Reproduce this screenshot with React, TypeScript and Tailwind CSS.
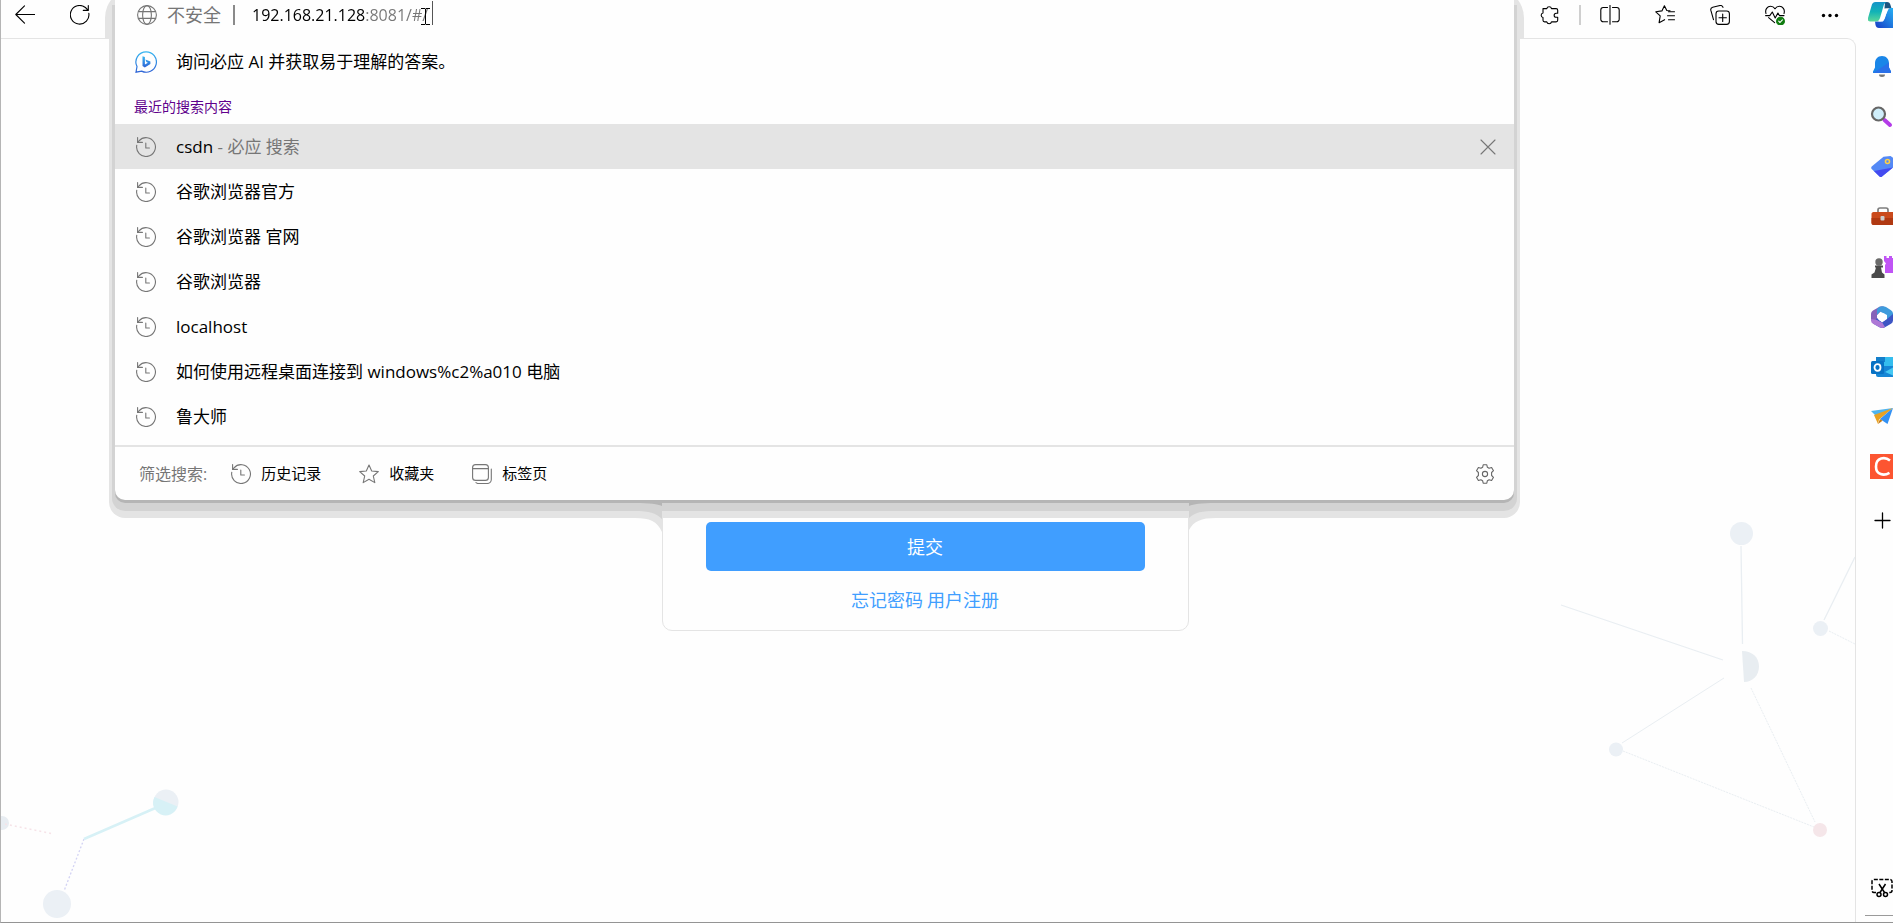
import type { ReactNode } from "react";
import { clsx } from "clsx";

type IconProps = {
  className?: string;
};

type LineIconProps = IconProps & {
  children: ReactNode;
};

function LineIcon({ className, children }: LineIconProps) {
  return (
    <svg
      viewBox="0 0 20 20"
      fill="none"
      stroke="currentColor"
      strokeWidth="1.1"
      strokeLinecap="round"
      strokeLinejoin="round"
      aria-hidden="true"
      className={clsx("h-5 w-5 shrink-0", className)}
    >
      {children}
    </svg>
  );
}

function HistoryIcon({ className }: IconProps) {
  return (
    <LineIcon className={className}>
      <path d="M.8 8.2A9.4 9.4 0 1 0 3 3.8L1.6 5.4" />
      <path d="M1.6.6v4.8h4.8M9.8 6v5h3.6" />
    </LineIcon>
  );
}

function StarIcon() {
  return (
    <LineIcon>
      <path d="M10 1l2.7 6 6.6.6-5 4.4 1.5 6.6L10 15.2l-5.8 3.4L5.700 12l-5-4.400 6.600-.6z" />
    </LineIcon>
  );
}

function TabsIcon() {
  return (
    <LineIcon>
      <rect x=".6" y=".6" width="15.800" height="15.800" rx="3" />
      <path d="M.8 4.600h15.400M19.300 5v10.500a4 4 0 0 1-4 4H6a3 3 0 0 1-2-.8" />
    </LineIcon>
  );
}

function GearIcon() {
  return (
    <LineIcon>
      <circle cx="10" cy="10" r="2.600" />
      <path d="M8.200.8h3.600l.6 2.500 1.700 1 2.500-.8 1.900 3.200-1.900 1.800v3l1.900 1.800-1.900 3.200-2.500-.8-1.700 1-.6 2.500H8.200l-.6-2.500-1.700-1-2.500.8-1.900-3.200 1.900-1.800v-3L1.500 6.700l1.900-3.200 2.500.8 1.700-1z" />
    </LineIcon>
  );
}

function GlobeIcon() {
  return (
    <LineIcon>
      <circle cx="10" cy="10" r="9.400" />
      <ellipse cx="10" cy="10" rx="4.400" ry="9.400" />
      <path d="M1.500 6.600h17M1.500 13.400h17" />
    </LineIcon>
  );
}

function CloseIcon() {
  return (
    <LineIcon>
      <path d="M3 3l14 14M17 3L3 17" />
    </LineIcon>
  );
}

function BingIcon() {
  return (
    <svg viewBox="0 0 22 22" aria-hidden="true" className="h-[22px] w-[22px] shrink-0">
      <defs>
        <linearGradient id="bing" x1="0" y1="0" x2="0" y2="1">
          <stop offset="0" stopColor="#35b5f0" />
          <stop offset="1" stopColor="#2f64d6" />
        </linearGradient>
      </defs>
      <path
        d="M11.200.8a10.200 10.200 0 1 1-4.600 19.300L1 21.200l1-5.600A10.200 10.200 0 0 1 11.200.8z"
        fill="none"
        stroke="url(#bing)"
        strokeWidth="1.200"
      />
      <path d="M7.500 5.200l2.400.9v7.300l3-1.700-1.500-.7-1-2.400 5 1.800v2.700l-5.600 3.300-2.300-1.300z" fill="url(#bing)" />
    </svg>
  );
}

const toolbarIcons = [
  {
    label: "分屏",
    icon: (
      <LineIcon>
        <path d="M7.500 2.500H3.200A2.400 2.400 0 0 0 .8 4.900v9.400a2.400 2.400 0 0 0 2.400 2.400h4.300M12.500 2.500h4.300a2.400 2.400 0 0 1 2.400 2.400v9.400a2.400 2.400 0 0 1-2.400 2.400h-4.300M10 .3v19" />
      </LineIcon>
    ),
  },
  {
    label: "收藏",
    icon: (
      <LineIcon>
        <path d="M15 5.900l-3.200-.4L9.400.7 6.900 5.900.8 6.800l4.400 4.100-1.100 6.800 5.500-3" />
        <path d="M13.500 6.800h6M12.500 10.800h7M13.500 14.800h6" />
      </LineIcon>
    ),
  },
  {
    label: "集锦",
    icon: (
      <LineIcon>
        <rect x="6" y="6" width="13.400" height="13.400" rx="2.800" />
        <path d="M12.700 9v7.400M9 12.700h7.400M3.500 14.600L.8 5.200a2.600 2.600 0 0 1 1.900-3L10 .5a2.500 2.500 0 0 1 3 2" />
      </LineIcon>
    ),
  },
  {
    label: "浏览器概要",
    icon: (
      <LineIcon>
        <path d="M1 8.500C-.3 4.500 2.500 1.300 5.500 1.300c2 0 3.500 1 4.500 2.500 1-1.500 2.500-2.500 4.500-2.500 3 0 5.800 3.200 4.500 7.200M3.600 12.600l6 5" />
        <path d="M.6 10.600h4.200L7.300 7l2.900 6 2.700-5 1.500 2.600H19" />
        <circle cx="15.500" cy="16.200" r="3.900" fill="#107c10" stroke="#107c10" />
        <path d="M13.700 16.200l1.300 1.300 2.400-2.600" stroke="#fff" />
      </LineIcon>
    ),
  },
  {
    label: "更多",
    icon: (
      <svg viewBox="0 0 20 20" aria-hidden="true" className="h-5 w-5">
        <circle cx="3.500" cy="10.500" r="1.700" />
        <circle cx="10" cy="10.500" r="1.700" />
        <circle cx="16.500" cy="10.500" r="1.700" />
      </svg>
    ),
  },
];

function Toolbar() {
  return (
    <header className="flex h-[38px] items-start justify-between pr-4 pl-[14px] pt-[5px] text-black">
      <div className="flex gap-[35px]">
        <button type="button" aria-label="返回">
          <LineIcon>
            <path d="M19.600 9.500H.8M9.500.8L.8 9.500l8.700 8.700" />
          </LineIcon>
        </button>
        <button type="button" aria-label="刷新">
          <LineIcon>
            <path d="M18.800 8.200A9.300 9.300 0 1 1 15.400 2.500L18.300 5.400M18.300.6v4.800h-5" />
          </LineIcon>
        </button>
      </div>
      <div className="flex items-center gap-[35px]">
        <div className="flex items-center gap-5">
          <button type="button" aria-label="扩展">
            <LineIcon>
              <path d="M4 3.600h3.800a2.400 2.400 0 0 1 4.700 0h4.600a1.600 1.600 0 0 1 1.600 1.600v3h-1.500a2 2 0 0 0 0 4.100h1.500v3a1.600 1.600 0 0 1-1.600 1.600h-4.600a2.400 2.400 0 0 1-4.700 0H5.600A1.600 1.600 0 0 1 4 15.300v-2.800a2.300 2.300 0 0 1 0-4.500z" />
            </LineIcon>
          </button>
          <span className="h-5 w-[2px] bg-[#cfcfcf]" />
        </div>
        <div className="-ml-4 flex gap-[35px]">
          {toolbarIcons.map(({ label, icon }) => (
            <button key={label} type="button" aria-label={label}>
              {icon}
            </button>
          ))}
        </div>
      </div>
    </header>
  );
}

const sidebarApps = [
  {
    label: "通知",
    icon: (
      <>
        <path d="M11 0c-4.500 0-7 3.300-7 7.500v4L2 15.500V17h18v-1.500l-2-4v-4C18 3.300 15.500 0 11 0z" fill="#1a86e8" />
        <path d="M18 6.500v5l2 4V17H2z" fill="#2a70e8" />
        <path d="M8 18.500h6a3 2.500 0 0 1-6 0z" fill="#777" />
      </>
    ),
  },
  {
    label: "搜索",
    icon: (
      <>
        <path d="M13.500 14l5.500 5" stroke="#b43be8" strokeWidth="4" strokeLinecap="round" />
        <circle cx="7.500" cy="8" r="6.500" fill="#cfeefa" stroke="#666" strokeWidth="2.200" />
      </>
    ),
  },
  {
    label: "购物",
    icon: (
      <>
        <path d="M12.500.8L19.500 0 23 2.500v8.300L11 20.500a2 2 0 0 1-2.500 0L.7 13a2 2 0 0 1 0-2.500z" fill="#5489f5" />
        <path d="M3 15L22 11.500 11 20.500a2 2 0 0 1-2.500 0z" fill="#444af0" />
        <circle cx="16.500" cy="5.500" r="2" fill="#5489f5" stroke="#ffd044" strokeWidth="1.600" />
      </>
    ),
  },
  {
    label: "工具",
    icon: (
      <>
        <path d="M7 6V4a2 2 0 0 1 2-2h6a2 2 0 0 1 2 2v2" fill="none" stroke="#7d7d7d" strokeWidth="1.700" />
        <path d="M.5 7.500A2 2 0 0 1 2.500 6H23v13H2.500a2 2 0 0 1-2-2z" fill="#ca4a1c" />
        <path d="M.5 12H23v7H2.500a2 2 0 0 1-2-2z" fill="#b03912" />
        <rect x="9.500" y="10" width="4" height="4.500" rx="1" fill="#ccc" />
      </>
    ),
  },
  {
    label: "游戏",
    icon: (
      <>
        <path d="M13 0h2.500v2H18V0h3v2h2v15h-9V9l1-1.500L13 5z" fill="#c054f5" />
        <circle cx="8" cy="6" r="3.700" fill="#6a6a6a" />
        <path d="M4 9.500h8v2h-2l1 5 2.500 2V22H.5v-3.500l3-2 1.500-5H4z" fill="#4a4a4a" />
      </>
    ),
  },
  {
    label: "Microsoft 365",
    icon: (
      <>
        <path d="M8.500.8L2 4.500A4 4 0 0 0 0 8v6.500l6 2.500V9l8-7.500a5 5 0 0 0-5.500-.7z" fill="#8662b8" />
        <path d="M8.500.8C11 0 13 0 15 1l5 3.200a4 4 0 0 1 2 3.500V12l-6 1.500V9L9 5.500 6 9V3z" fill="#3e9bdc" />
        <path d="M22 8v6.500a4 4 0 0 1-2 3.300l-6.500 3.600a5 5 0 0 1-5-.2L2 17.500 6 12l5 4.500L16 13z" fill="#3d55c4" />
        <path d="M0 13l6 1 5.500 3 2.500 4a5 5 0 0 1-5.500.2L2 17.800A4 4 0 0 1 0 14.500z" fill="#ad78d6" />
        <circle cx="10.900" cy="11" r="4" fill="#fff" />
      </>
    ),
  },
  {
    label: "Outlook",
    icon: (
      <>
        <path d="M5 1h18v10H5z" fill="#34bdee" />
        <path d="M5 1h9v5H5z" fill="#147fcb" />
        <path d="M5 10h18v11H7a2 2 0 0 1-2-2z" fill="#1686d5" />
        <path d="M23 11l-9 5 9 4z" fill="#45c8f3" />
        <rect x="0" y="5" width="13" height="13" rx="1.500" fill="#0872c4" />
        <ellipse cx="6.500" cy="11.500" rx="3" ry="3.300" fill="none" stroke="#fff" strokeWidth="1.800" />
      </>
    ),
  },
  {
    label: "Drop",
    icon: (
      <>
        <path d="M0 5l22-3L9 12 5 10z" fill="#4fb4ef" />
        <path d="M3 9L22 2 8 13.500 7 18z" fill="#e9a222" />
        <path d="M22 2L9 13l7.500 5z" fill="#3391f3" />
        <path d="M9 13l-2 5 4.500-3.200z" fill="#c77a12" />
      </>
    ),
  },
];

function Sidebar() {
  return (
    <aside className="flex w-[37px] shrink-0 flex-col overflow-hidden bg-[#fefefe] pt-[2px]">
      <a href="#copilot" aria-label="Copilot" className="ml-3 w-[26px] shrink-0">
        <svg viewBox="0 0 26 26" aria-hidden="true" className="h-[26px] w-[26px]">
          <defs>
            <linearGradient id="copilot-a" x1="0" y1="0" x2="0" y2="1">
              <stop offset="0" stopColor="#1593c9" />
              <stop offset="0.500" stopColor="#12b3b6" />
              <stop offset="1" stopColor="#5bd69a" />
            </linearGradient>
            <linearGradient id="copilot-b" x1="0" y1="1" x2="1" y2="0">
              <stop offset="0" stopColor="#173bc6" />
              <stop offset="1" stopColor="#27b4f5" />
            </linearGradient>
          </defs>
          <path d="M17 0h2c2 0 3 1 3.500 3l1 3.500h-7z" fill="#1b5480" />
          <path d="M7 19.500h8L20 8c.5-1.500 1.500-2 3-2h3v20H11c-2 0-3-1-3.500-3z" fill="url(#copilot-b)" />
          <path d="M7.500 0H19c-2 .5-3 2-3.500 4L12 16c-.7 2.500-2 3.500-4.500 3.500H2c-2 0-2.500-1.500-2-3.500L3.500 4C4 1.500 5.500 0 7.500 0z" fill="url(#copilot-a)" />
          <path d="M19 6.500h2.500c-1.500.5-2.300 1.500-2.800 3.500l-1.700 6c-.8 2.500-2 3.500-4.500 3.500H9.500c2 0 2.500-1 3.200-3.500l1.800-6c.8-2.500 2-3.500 4.500-3.500z" fill="#fff" />
        </svg>
      </a>
      <nav className="mt-7 flex flex-col gap-7 pl-[15px]">
        {sidebarApps.map(({ label, icon }) => (
          <a key={label} href="#app" aria-label={label} className="h-[22px] w-[22px]">
            <svg viewBox="0 0 22 22" fill="none" overflow="visible" aria-hidden="true" className="h-[22px] w-[22px]">
              {icon}
            </svg>
          </a>
        ))}
      </nav>
      <a
        href="#csdn"
        aria-label="CSDN"
        className="mt-[26px] ml-[14px] flex h-[25px] w-[25px] shrink-0 items-center justify-center bg-[#fc5531]"
      >
        <svg viewBox="0 0 25 25" aria-hidden="true" className="h-[25px] w-[25px]">
          <path d="M20 6.500c-5-4-14-3.200-14 6.200 0 8.300 8 9.300 13.500 6.200" fill="none" stroke="#fff" strokeWidth="2.600" />
        </svg>
      </a>
      <button type="button" aria-label="自定义" className="mt-8 ml-4 h-5 w-5 shrink-0 text-black">
        <LineIcon>
          <path d="M3 9.500h15M10.500 2v15" strokeWidth="1.300" />
        </LineIcon>
      </button>
      <div className="mt-auto flex flex-col items-end gap-[17px] pb-[6px]">
        <button type="button" aria-label="屏幕截图" className="text-black">
          <svg
            viewBox="0 0 22 20"
            fill="none"
            stroke="currentColor"
            strokeWidth="1.500"
            aria-hidden="true"
            className="h-5 w-[22px]"
          >
            <path d="M5 14.500H3a2 2 0 0 1-2-2V3.500a2 2 0 0 1 2-2h16a2 2 0 0 1 2 2v9a2 2 0 0 1-2 2h-1.500" strokeDasharray="4 1.500" />
            <path d="M8 6l5.500 8.500M14.500 6L9 14.500" />
            <circle cx="8" cy="16.500" r="2" />
            <circle cx="14.500" cy="16.500" r="2" />
          </svg>
        </button>
        <span className="h-px w-7 bg-[#9a9a9a]" />
      </div>
    </aside>
  );
}

function NetworkLeft() {
  return (
    <svg viewBox="0 -2 190 140" aria-hidden="true" className="absolute bottom-0 left-0 h-[140px] w-[190px]">
      <circle cx="1" cy="39" r="7" fill="#e8edf2" />
      <path d="M4 40l49 10" stroke="#f6e3e8" strokeWidth="1.500" strokeDasharray="2 3" />
      <path d="M83 55L63 107" stroke="#d3d3f4" strokeWidth="1.300" strokeDasharray="2 2" />
      <path d="M83 55l76-33" stroke="#d7f1f6" strokeWidth="2.500" />
      <circle cx="165" cy="18" r="12.500" fill="#ebf0f5" />
      <path d="M153.500 13l23 9.500A12.500 12.500 0 1 1 153.500 13z" fill="#d7f1f6" />
      <circle cx="56" cy="120" r="14" fill="#ebf0f5" />
    </svg>
  );
}

function NetworkRight() {
  return (
    <svg
      viewBox="0 0 300 340"
      fill="none"
      stroke="#e9eef2"
      aria-hidden="true"
      className="absolute right-0 bottom-[61px] h-[340px] w-[300px]"
    >
      <path d="M186 25l1.500 98M6 84l162 55M269 99l31-63" strokeWidth="1.300" />
      <path d="M169 157L67 222" />
      <path d="M68 230l191 76M196 167l64 134M274 110l26 13" strokeDasharray="2 1" />
      <circle cx="186.500" cy="12.500" r="11.500" fill="#ebf0f5" stroke="none" />
      <path d="M187 130c11 0 17 7 17 15.500S198 161 189 161z" fill="#e8edf1" stroke="none" />
      <circle cx="61" cy="228.500" r="7" fill="#ebf0f5" stroke="none" />
      <circle cx="265.500" cy="107.500" r="7.500" fill="#ebf0f5" stroke="none" />
      <circle cx="265" cy="309" r="7" fill="#f5e6e9" stroke="none" />
    </svg>
  );
}

function LoginCard() {
  return (
    <form
      className="relative mt-[360px] mr-[6px] w-[527px] rounded-[10px] border border-[#e4e4e4] bg-[#fefefe] px-[43px] pt-[122px] pb-[18px]"
      onSubmit={(e) => e.preventDefault()}
    >
      {/* soft edges where the card meets the panel */}
      <svg viewBox="0 0 27 34" aria-hidden="true" className="absolute top-[100px] -left-7 z-10 h-[34px] w-[27px]">
        <path d="M0 18C15 18 22 21 27 32V0H0z" fill="#e4e4e4" />
        <path d="M0 11c14 0 21 2 27 8V0H0z" fill="#d3d3d3" />
        <path d="M0 3c16 0 22 1 27 3V0H0z" fill="#b5b5b5" />
      </svg>
      <svg viewBox="0 0 27 34" aria-hidden="true" className="absolute top-[100px] -right-7 z-10 h-[34px] w-[27px]">
        <path d="M27 18C12 18 5 21 0 30V0h27z" fill="#e4e4e4" />
        <path d="M27 11C13 11 6 12 0 18V0h27z" fill="#d3d3d3" />
        <path d="M27 3C11 3 5 4 0 6V0h27z" fill="#b5b5b5" />
      </svg>
      <button type="submit" className="h-[49px] w-full rounded-[5px] bg-[#409eff] text-lg text-white">
        提交
      </button>
      <div className="mt-[17px] flex justify-center gap-1 text-lg leading-6 text-[#409eff]">
        <a href="#forgot">忘记密码</a>
        <a href="#register">用户注册</a>
      </div>
    </form>
  );
}

const recentSearches = [
  { text: "csdn", hint: "必应 搜索" },
  { text: "谷歌浏览器官方" },
  { text: "谷歌浏览器 官网" },
  { text: "谷歌浏览器" },
  { text: "localhost" },
  { text: "如何使用远程桌面连接到 windows%c2%a010 电脑" },
  { text: "鲁大师" },
];

const filters = [
  { label: "历史记录", icon: <HistoryIcon /> },
  { label: "收藏夹", icon: <StarIcon /> },
  { label: "标签页", icon: <TabsIcon /> },
];

function AddressPanel() {
  return (
    <section className="absolute top-0 right-[379px] left-[114px] rounded-b-[10px] bg-[#fefefe] text-[17px] text-black shadow-[0_3px_0_0_#b5b5b5,0_8px_0_3px_#d3d3d3,0_12px_0_6px_#e4e4e4]">
      <label className="relative flex h-[38px] items-start pt-[5px] pl-[22px] leading-5 text-[#767676]">
        <GlobeIcon />
        <span className="ml-[10px] text-lg leading-5">不安全</span>
        <span className="ml-3 h-5 w-[2px] bg-[#8a8a8a]" />
        <input
          type="text"
          defaultValue="192.168.21.128:8081/#/"
          className="ml-[17px] h-5 w-[180px] bg-[linear-gradient(90deg,#000_114px,#767676_114px)] bg-clip-text text-base leading-5 text-transparent outline-none"
        />
        <span className="-mt-1 h-6 w-px bg-[#555]" />
        <svg
          viewBox="0 0 9 17"
          fill="none"
          stroke="#000"
          aria-hidden="true"
          className="absolute top-2 left-[306px] h-[17px] w-[9px]"
        >
          <path d="M0 .5h4l.5.5.5-.5h4M4.500 1v15M0 16.500h4l.5-.5.5.5h4" />
        </svg>
      </label>
      <button type="button" className="flex h-12 w-full items-center gap-[19px] pl-5 text-left">
        <BingIcon />
        询问必应 AI 并获取易于理解的答案。
      </button>
      <h2 className="flex h-[38px] items-center pt-1 pl-[19px] text-sm text-[#60008c]">最近的搜索内容</h2>
      <ul className="pb-[6px]">
        {recentSearches.map(({ text, hint }) => (
          <li
            key={text}
            className={clsx("flex h-[45px] items-center pr-4 pl-[21px]", hint && "bg-[#e4e4e4]")}
          >
            <a href="#search" className="flex flex-1 items-center gap-5">
              <HistoryIcon className="text-[#767676]" />
              <span>
                {text}
                {hint && <span className="text-[#767676]"> - {hint}</span>}
              </span>
            </a>
            {hint && (
              <button type="button" aria-label="删除" className="text-[#767676]">
                <CloseIcon />
              </button>
            )}
          </li>
        ))}
      </ul>
      <footer className="flex h-[55px] items-center justify-between border-t-2 border-[#e4e4e4] pr-[19px] pl-6">
        <div className="flex items-center">
          <span className="mr-6 text-base text-[#767676]">筛选搜索:</span>
          <div className="flex gap-[38px]">
            {filters.map(({ label, icon }) => (
              <button key={label} type="button" className="flex items-center gap-[10px] text-[15px]">
                <span className="text-[#767676]">{icon}</span>
                {label}
              </button>
            ))}
          </div>
        </div>
        <button type="button" aria-label="设置" className="text-[#666]">
          <GearIcon />
        </button>
      </footer>
    </section>
  );
}

export default function App() {
  return (
    <div className="relative flex min-h-screen border-b border-l border-b-[#949494] border-l-[#b5b5b5] bg-[#fefefe] font-['Open_Sans','Noto_Sans_CJK_SC',sans-serif]">
      <div className="flex min-w-0 flex-1 flex-col">
        <Toolbar />
        <main className="relative flex flex-1 items-start justify-center overflow-hidden rounded-tr-[9px] border-t border-r border-[#e4e4e4]">
          <NetworkLeft />
          <NetworkRight />
          <LoginCard />
        </main>
      </div>
      <Sidebar />
      {/* rounded ends of the address bar behind the panel */}
      <div className="absolute -top-3 right-[369px] left-[104px] h-[50px] rounded-t-[30px] bg-[#e4e4e4]" />
      <AddressPanel />
    </div>
  );
}
